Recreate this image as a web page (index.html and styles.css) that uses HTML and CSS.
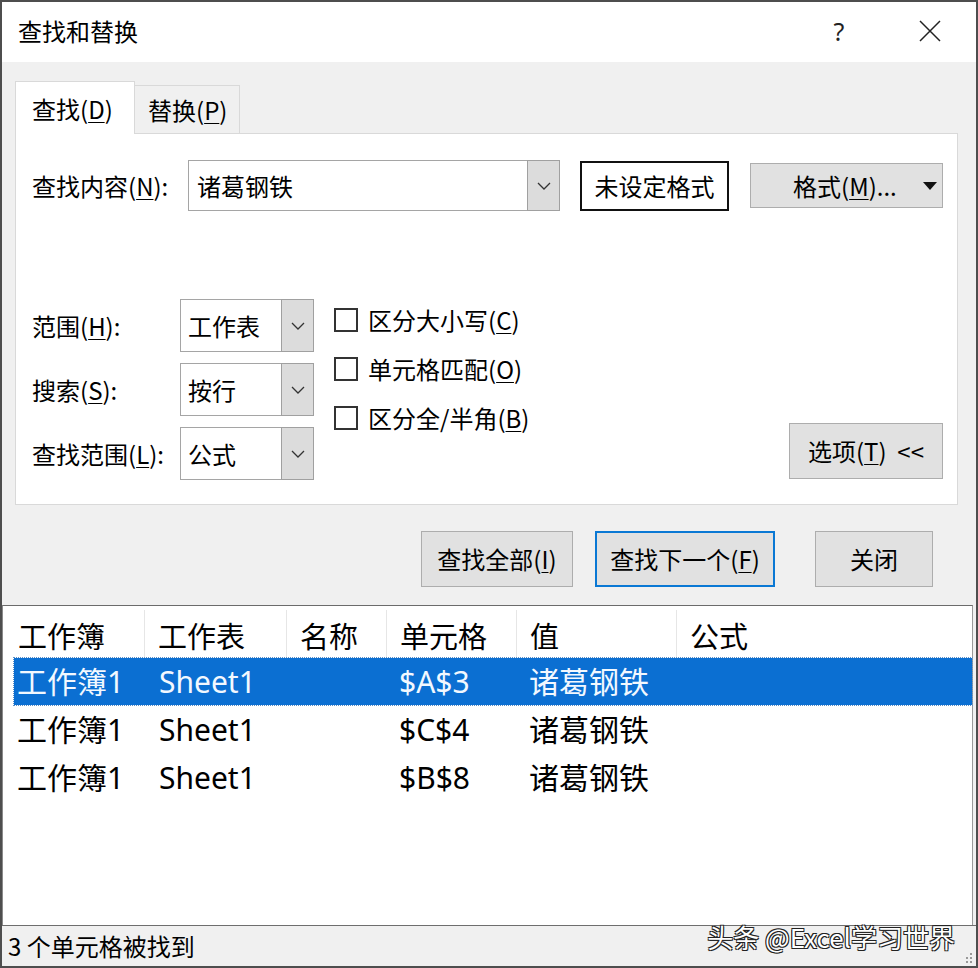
FILE: index.html
```html
<!DOCTYPE html>
<html>

<head>
    <meta http-equiv="Content-Type" content="text/html; charset=utf-8" />
    <title>查找和替换</title>
    <link rel="stylesheet" href="styles.css">
</head>

<body>

    <div class="dlg">
        <!-- 标题栏 -->
        <div class="dlg-title">
            <span class="dlg-title-text">查找和替换</span>
            <span class="dlg-help">?</span>
            <span class="dlg-close">
                <svg width="22" height="22" viewBox="0 0 22 22"><path d="M1 1L21 21M21 1L1 21" stroke="#222" stroke-width="1.5" fill="none" /></svg>
            </span>
        </div>

        <div class="dlg-body">
            <div class="tabs">
                <div class="tab tab-on">查找(<u>D</u>)</div>
                <div class="tab">替换(<u>P</u>)</div>
            </div>

            <div class="panel">
                <div class="find-row">
                    <span class="find-label">查找内容(<u>N</u>):</span>
                    <div class="combo combo-find">
                        <span class="combo-text">诸葛钢铁</span>
                        <span class="combo-arrow"><svg width="14" height="8" viewBox="0 0 14 8"><path d="M1 1L7 7L13 1" stroke="#333" stroke-width="1.3" fill="none" /></svg></span>
                    </div>
                    <div class="nofmt">未设定格式</div>
                    <div class="btn btn-fmt">
                        <span>格式(<u>M</u>)...</span>
                        <svg width="14" height="8" viewBox="0 0 14 8"><path d="M0 0H14L7 8Z" fill="#111" /></svg>
                    </div>
                </div>

                <div class="options">
                    <div class="opt-grid">
                        <span class="opt-label">范围(<u>H</u>):</span>
                        <div class="combo combo-sm">
                            <span class="combo-text">工作表</span>
                            <span class="combo-arrow"><svg width="14" height="8" viewBox="0 0 14 8"><path d="M1 1L7 7L13 1" stroke="#333" stroke-width="1.3" fill="none" /></svg></span>
                        </div>
                        <span class="opt-label">搜索(<u>S</u>):</span>
                        <div class="combo combo-sm">
                            <span class="combo-text">按行</span>
                            <span class="combo-arrow"><svg width="14" height="8" viewBox="0 0 14 8"><path d="M1 1L7 7L13 1" stroke="#333" stroke-width="1.3" fill="none" /></svg></span>
                        </div>
                        <span class="opt-label">查找范围(<u>L</u>):</span>
                        <div class="combo combo-sm">
                            <span class="combo-text">公式</span>
                            <span class="combo-arrow"><svg width="14" height="8" viewBox="0 0 14 8"><path d="M1 1L7 7L13 1" stroke="#333" stroke-width="1.3" fill="none" /></svg></span>
                        </div>
                    </div>

                    <div class="checks">
                        <div class="check"><span class="box"></span>区分大小写(<u>C</u>)</div>
                        <div class="check"><span class="box"></span>单元格匹配(<u>O</u>)</div>
                        <div class="check"><span class="box"></span>区分全/半角(<u>B</u>)</div>
                    </div>

                    <div class="btn btn-opt">选项(<u>T</u>)&nbsp;&nbsp;&lt;&lt;</div>
                </div>
            </div>

            <div class="actions">
                <div class="btn btn-all">查找全部(<u>I</u>)</div>
                <div class="btn btn-next">查找下一个(<u>F</u>)</div>
                <div class="btn btn-close">关闭</div>
            </div>
        </div>

        <!-- 查找结果 -->
        <div class="results">
            <div class="res-head">
                <span>工作簿</span>
                <span>工作表</span>
                <span>名称</span>
                <span>单元格</span>
                <span>值</span>
                <span>公式</span>
            </div>
            <div class="res-row res-sel">
                <span>工作簿1</span><span>Sheet1</span><span></span><span>$A$3</span><span>诸葛钢铁</span><span></span>
            </div>
            <div class="res-row">
                <span>工作簿1</span><span>Sheet1</span><span></span><span>$C$4</span><span>诸葛钢铁</span><span></span>
            </div>
            <div class="res-row">
                <span>工作簿1</span><span>Sheet1</span><span></span><span>$B$8</span><span>诸葛钢铁</span><span></span>
            </div>
        </div>

        <div class="status">
            <span class="status-text">3 个单元格被找到</span>
            <span class="watermark">头条 @Excel学习世界</span>
            <svg class="grip" width="10" height="12" viewBox="0 0 10 12">
                <rect x="7" y="1" width="2" height="2" fill="#999" />
                <rect x="7" y="5" width="2" height="2" fill="#999" />
                <rect x="3" y="5" width="2" height="2" fill="#999" />
                <rect x="7" y="9" width="2" height="2" fill="#999" />
                <rect x="3" y="9" width="2" height="2" fill="#999" />
            </svg>
        </div>
    </div>

</body>

</html>
```

FILE: styles.css
```css
* {
    box-sizing: border-box;
}

body {
    margin: 0px;
    padding: 0px;
    background: #fff;
    font-family: "Noto Sans CJK SC", sans-serif;
    font-size: 24px;
    line-height: 1;
    color: #000;
}

u {
    text-decoration: underline;
    text-underline-offset: 3px;
    text-decoration-thickness: 1px;
}

.dlg {
    width: 978px;
    height: 968px;
    border: 2px solid #4e4e4e;
    display: flex;
    flex-direction: column;
    background: #f0f0f0;
}

/* 标题栏 */
.dlg-title {
    height: 60px;
    background: #fff;
    display: flex;
    align-items: center;
    padding: 0px 16px 2px 16px;
}

.dlg-title-text {
    flex: 1;
}

.dlg-help {
    width: 40px;
    text-align: center;
    font-family: "Noto Sans", sans-serif;
    font-size: 25px;
    color: #222;
}

.dlg-close {
    width: 60px;
    margin-left: 41px;
    display: flex;
    justify-content: center;
}

.dlg-body {
    height: 543px;
    padding: 19px 0px 0px 13px;
}

/* 选项卡 */
.tabs {
    display: flex;
    align-items: flex-end;
    height: 52px;
}

.tab {
    height: 48px;
    width: 105px;
    padding-left: 13px;
    display: flex;
    align-items: center;
    border: 1px solid #d9d9d9;
    border-bottom: none;
    border-left: none;
    background: #f0f0f0;
}

.tab-on {
    height: 53px;
    width: 120px;
    padding-left: 16px;
    padding-top: 2px;
    margin-bottom: -1px;
    border-left: 1px solid #d9d9d9;
    background: #fff;
    position: relative;
}

.panel {
    width: 943px;
    height: 372px;
    border: 1px solid #d9d9d9;
    background: #fff;
    padding: 26px 14px 0px 16px;
}

.find-row {
    display: flex;
    align-items: center;
    height: 51px;
}

.find-label {
    width: 156px;
}

.combo {
    display: flex;
    border: 1px solid #a5a5a5;
    background: #fff;
}

.combo-find {
    width: 372px;
    height: 51px;
}

.combo-text {
    flex: 1;
    display: flex;
    align-items: center;
    padding-left: 8px;
}

.combo-arrow {
    width: 33px;
    background: #dcdcdc;
    border: 1px solid #a0a0a0;
    margin: -1px -1px -1px 0px;
    display: flex;
    align-items: center;
    justify-content: center;
}

.combo-sm {
    width: 134px;
    height: 53px;
}

.combo-sm .combo-text {
    padding-left: 7px;
}

.nofmt {
    width: 149px;
    height: 50px;
    margin-left: 20px;
    border: 2px solid #111;
    display: flex;
    align-items: center;
    justify-content: center;
}

.btn {
    background: #e1e1e1;
    border: 1px solid #adadad;
    display: flex;
    align-items: center;
    justify-content: center;
}

.btn-fmt {
    width: 193px;
    height: 45px;
    margin-left: 21px;
    justify-content: flex-start;
    padding: 0px 5px 0px 42px;
}

.btn-fmt span {
    flex: 1;
}

.options {
    display: flex;
    margin-top: 88px;
}

.opt-grid {
    display: grid;
    grid-template-columns: 148px 134px;
    grid-auto-rows: 53px;
    row-gap: 11px;
    align-items: center;
}

.checks {
    margin-left: 20px;
    padding-top: 9px;
    display: flex;
    flex-direction: column;
    gap: 25px;
}

.check {
    display: flex;
    align-items: center;
    height: 24px;
}

.box {
    width: 24px;
    height: 24px;
    border: 2px solid #333;
    background: #fff;
    margin-right: 10px;
}

.btn-opt {
    width: 154px;
    height: 56px;
    margin-left: auto;
    margin-bottom: 1px;
    align-self: flex-end;
}

.actions {
    display: flex;
    margin-top: 26px;
    padding-left: 406px;
    height: 56px;
}

.btn-all {
    width: 152px;
}

.btn-next {
    width: 180px;
    margin-left: 22px;
    border: 2px solid #0a78d4;
}

.btn-close {
    width: 118px;
    margin-left: 40px;
}

/* 结果列表 */
.results {
    height: 320px;
    margin-right: 3px;
    background: #fff;
    border-top: 1px solid #6b6b6b;
    border-left: 1px solid #8a8a8a;
    border-right: 1px solid #9a9a9a;
    font-family: "Noto Sans", "Noto Sans CJK SC", sans-serif;
    font-size: 30px;
}

.res-head {
    display: grid;
    grid-template-columns: 140px 142px 100px 130px 160px 1fr;
    height: 52px;
    margin-left: 2px;
    padding-top: 4px;
    font-size: 29px;
}

.res-head span {
    display: flex;
    align-items: center;
    padding: 2px 0px 0px 13px;
    border-right: 1px solid #e6e6e6;
    font-family: "Noto Sans CJK SC", sans-serif;
}

.res-head span:last-child {
    border-right: none;
}

.res-row {
    display: grid;
    grid-template-columns: 130px 142px 100px 130px 160px 1fr;
    height: 48px;
    margin-left: 11px;
    align-items: center;
}

.res-row span {
    padding-left: 13px;
}

.res-row span:first-child {
    padding-left: 3px;
}

.res-row span:nth-child(2) {
    padding-left: 15px;
}

.res-sel {
    height: 47px;
    margin-bottom: 1px;
    background: #0b6fd2;
    color: #f2f8ff;
    outline: 1px dotted #5d8fc6;
}

.status {
    height: 41px;
    border-top: 1px solid #6e6e6e;
    display: flex;
    align-items: center;
    padding-left: 6px;
    font-size: 24px;
}

.status-text {
    flex: 1;
}

.watermark {
    align-self: flex-start;
    margin-top: -2px;
    margin-right: 8px;
    font-size: 26px;
    color: #fff;
    text-shadow: 1px 1px 0 #222, -1px -1px 0 #222, 1px -1px 0 #222, -1px 1px 0 #222;
}

.grip {
    align-self: flex-end;
    margin: 0px 3px 2px 0px;
}
```
